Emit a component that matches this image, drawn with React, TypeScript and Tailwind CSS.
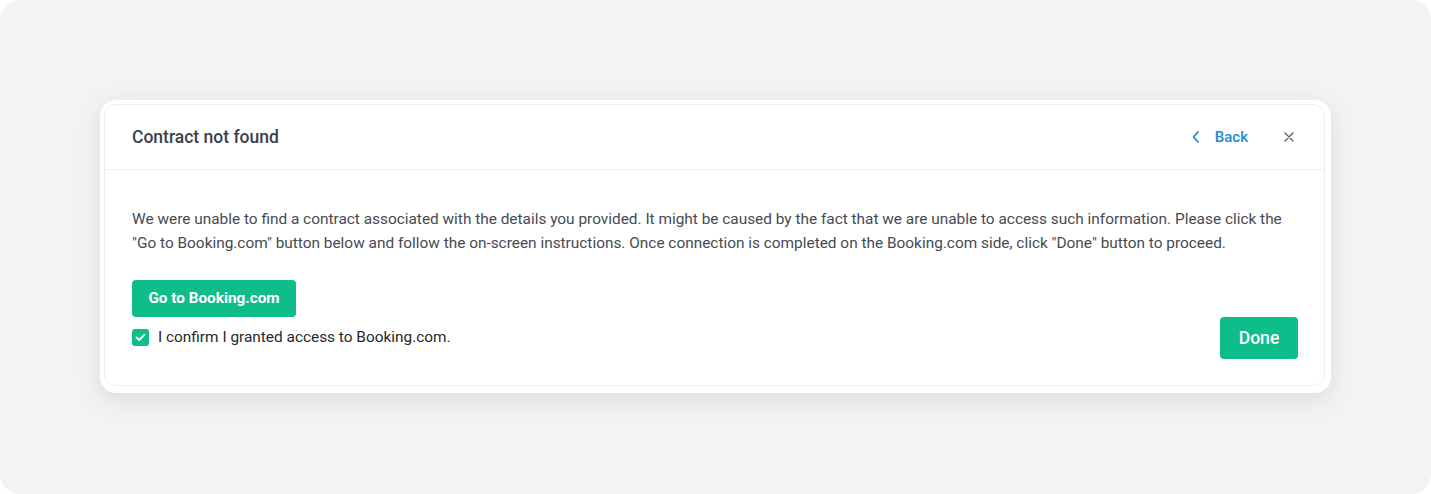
import React, { useState } from "react";

export default function App() {
  const [checked, setChecked] = useState(true);
  return (
    <div className="w-full h-[494px] bg-white font-['Roboto',sans-serif]">
      <div className="w-full h-full bg-[#f3f3f4] rounded-[20px] px-[100px] pt-[100px]">
        {/* modal */}
        <div className="bg-white rounded-[16px] pt-[4px] pl-[4px] pr-[6px] pb-[7px] shadow-[0_6px_24px_rgba(0,0,0,0.10)]">
          <div className="border border-[#eeeeee] rounded-[12px]">
            {/* header */}
            <div className="h-[65px] px-[27px] flex items-center justify-between border-b border-[#eeeeee]">
              <h2 className="text-[17.5px] font-medium text-[#3b404c]">Contract not found</h2>
              <div className="flex items-center">
                <button className="flex items-center text-[#1a8cd8] text-[15px] font-medium">
                  <svg width="10" height="14" viewBox="0 0 10 14" className="mr-[14px]">
                    <path d="M7 2 L2.5 7 L7 12" fill="none" stroke="currentColor" strokeWidth="1.8" strokeLinecap="round" strokeLinejoin="round" />
                  </svg>
                  Back
                </button>
                <button className="ml-[36px] mr-[3px] text-[#5d6370]">
                  <svg width="10" height="10" viewBox="0 0 10 10">
                    <path d="M1 1 L9 9 M9 1 L1 9" stroke="currentColor" strokeWidth="1.4" strokeLinecap="round" />
                  </svg>
                </button>
              </div>
            </div>
            {/* body */}
            <div className="pl-[27px] pr-[26px] pt-[37px] pb-[26px]">
              <p className="text-[15.4px] leading-[24px] text-[#464a52]">
                We were unable to find a contract associated with the details you provided. It might be caused by the fact that we are unable to access such information. Please click the "Go to Booking.com" button below and follow the on-screen instructions. Once connection is completed on the Booking.com side, click "Done" button to proceed.
              </p>
              <button className="mt-[25px] h-[37px] w-[164px] rounded-[4px] bg-[#0fbd8a] text-white text-[15.3px] font-bold">
                Go to Booking.com
              </button>
              <div className="h-[42px] flex items-center justify-between">
                <label className="flex items-center cursor-pointer" onClick={() => setChecked(!checked)}>
                  <span className={"w-[17px] h-[17px] rounded-[3px] flex items-center justify-center " + (checked ? "bg-[#0fbd8a]" : "border border-[#bbbbbb] bg-white")}>
                    {checked && (
                      <svg width="11" height="9" viewBox="0 0 11 9">
                        <path d="M1.5 4.5 L4.2 7 L9.5 1.8" fill="none" stroke="white" strokeWidth="1.9" strokeLinecap="round" strokeLinejoin="round" />
                      </svg>
                    )}
                  </span>
                  <span className="ml-[9px] text-[15.4px] text-[#26282d]">I confirm I granted access to Booking.com.</span>
                </label>
                <button className="w-[78px] h-[42px] rounded-[4px] bg-[#0fbd8a] text-white text-[17.6px] font-medium">
                  Done
                </button>
              </div>
            </div>
          </div>
        </div>
      </div>
    </div>
  );
}
